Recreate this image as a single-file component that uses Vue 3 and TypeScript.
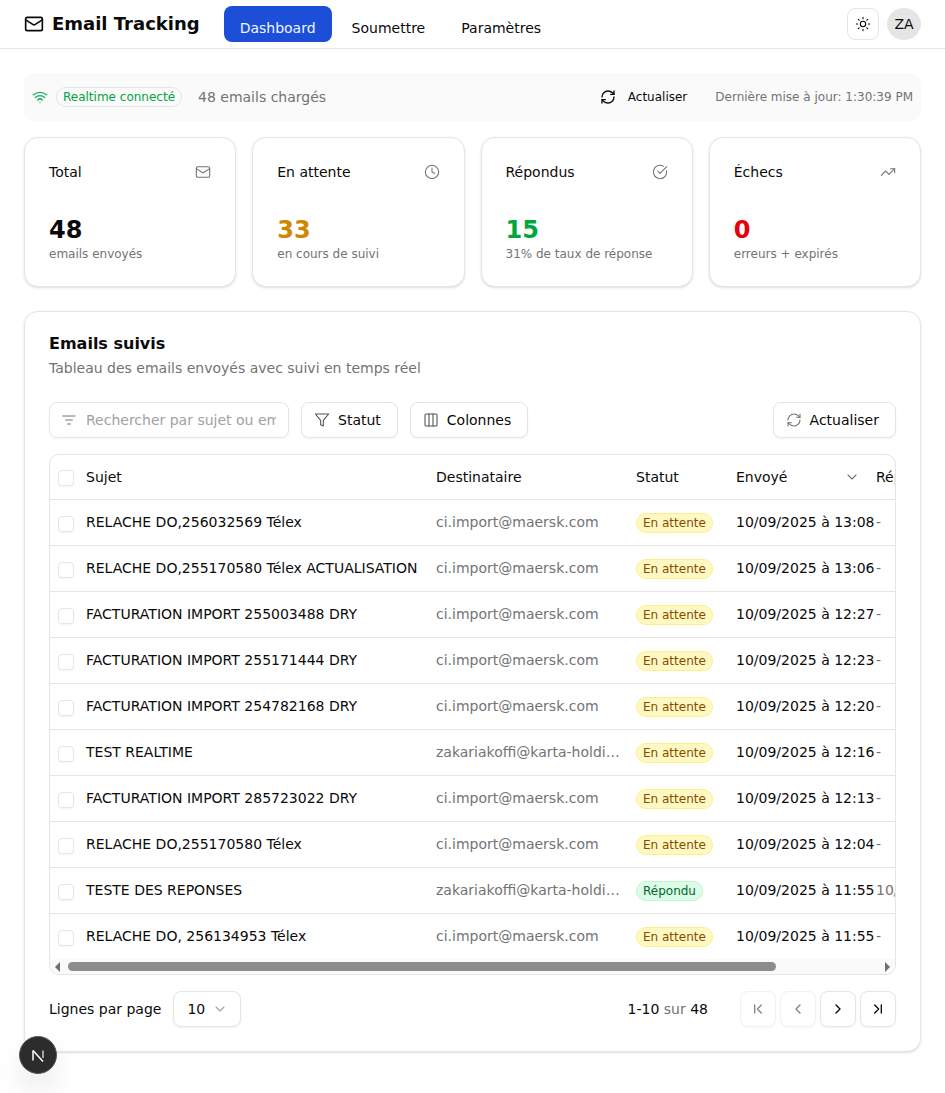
<script setup lang="ts">
interface Row { subject: string; to: string; status: string; sent: string; reply: string }
const m = 'ci.import@maersk.com'
const z = 'zakariakoffi@karta-holding.ci'
const w = 'En attente'
const rows: Row[] = [
  { subject: 'RELACHE DO,256032569 Télex', to: m, status: w, sent: '10/09/2025 à 13:08', reply: '-' },
  { subject: 'RELACHE DO,255170580 Télex ACTUALISATION', to: m, status: w, sent: '10/09/2025 à 13:06', reply: '-' },
  { subject: 'FACTURATION IMPORT 255003488 DRY', to: m, status: w, sent: '10/09/2025 à 12:27', reply: '-' },
  { subject: 'FACTURATION IMPORT 255171444 DRY', to: m, status: w, sent: '10/09/2025 à 12:23', reply: '-' },
  { subject: 'FACTURATION IMPORT 254782168 DRY', to: m, status: w, sent: '10/09/2025 à 12:20', reply: '-' },
  { subject: 'TEST REALTIME', to: z, status: w, sent: '10/09/2025 à 12:16', reply: '-' },
  { subject: 'FACTURATION IMPORT 285723022 DRY', to: m, status: w, sent: '10/09/2025 à 12:13', reply: '-' },
  { subject: 'RELACHE DO,255170580 Télex', to: m, status: w, sent: '10/09/2025 à 12:04', reply: '-' },
  { subject: 'TESTE DES REPONSES', to: z, status: 'Répondu', sent: '10/09/2025 à 11:55', reply: '10/09/2025 à 12:02' },
  { subject: 'RELACHE DO, 256134953 Télex', to: m, status: w, sent: '10/09/2025 à 11:55', reply: '-' },
]
const cards = [
  { title: 'Total', value: '48', sub: 'emails envoyés', cls: 'v-black', icon: 'mail' },
  { title: 'En attente', value: '33', sub: 'en cours de suivi', cls: 'v-amber', icon: 'clock' },
  { title: 'Répondus', value: '15', sub: '31% de taux de réponse', cls: 'v-green', icon: 'check' },
  { title: 'Échecs', value: '0', sub: 'erreurs + expirés', cls: 'v-red', icon: 'trend' },
]
</script>

<template>
  <div class="page">
    <header class="topbar">
      <div class="brand">
        <svg class="brand-icon" viewBox="0 0 24 24"><rect x="2" y="4" width="20" height="16" rx="2" /><path d="m22 7-8.97 5.7a1.94 1.94 0 0 1-2.06 0L2 7" /></svg>
        <span>Email Tracking</span>
      </div>
      <nav class="nav">
        <a class="nav-item active">Dashboard</a>
        <a class="nav-item">Soumettre</a>
        <a class="nav-item">Paramètres</a>
      </nav>
      <div class="top-right">
        <button class="theme">
          <svg viewBox="0 0 24 24"><circle cx="12" cy="12" r="4" /><path d="M12 2v2M12 20v2M4.93 4.93l1.41 1.41M17.66 17.66l1.41 1.41M2 12h2M20 12h2M6.34 17.66l-1.41 1.41M19.07 4.93l-1.41 1.41" /></svg>
        </button>
        <div class="avatar">ZA</div>
      </div>
    </header>

    <main class="main">
      <section class="status">
        <svg class="wifi" viewBox="0 0 24 24"><path d="M12 20h.01M2 8.82a15 15 0 0 1 20 0M5 12.859a10 10 0 0 1 14 0M8.5 16.429a5 5 0 0 1 7 0" /></svg>
        <span class="rt-badge">Realtime connecté</span>
        <span class="loaded">48 emails chargés</span>
        <button class="status-refresh">
          <svg viewBox="0 0 24 24"><path d="M3 12a9 9 0 0 1 9-9 9.75 9.75 0 0 1 6.74 2.74L21 8" /><path d="M21 3v5h-5" /><path d="M21 12a9 9 0 0 1-9 9 9.75 9.75 0 0 1-6.74-2.74L3 16" /><path d="M8 16H3v5" /></svg>
          <span>Actualiser</span>
        </button>
        <span class="updated">Dernière mise à jour: 1:30:39 PM</span>
      </section>

      <section class="cards">
        <article v-for="c in cards" :key="c.title" class="card">
          <div class="card-head">
            <span class="card-title">{{ c.title }}</span>
            <svg class="card-icon" viewBox="0 0 24 24">
              <template v-if="c.icon === 'mail'"><rect x="2" y="4" width="20" height="16" rx="2" /><path d="m22 7-8.97 5.7a1.94 1.94 0 0 1-2.06 0L2 7" /></template>
              <template v-else-if="c.icon === 'clock'"><circle cx="12" cy="12" r="10" /><path d="M12 6v6l4 2" /></template>
              <template v-else-if="c.icon === 'check'"><path d="M21.801 10A10 10 0 1 1 17 3.335" /><path d="m9 11 3 3L22 4" /></template>
              <template v-else><path d="M16 7h6v6" /><path d="m22 7-8.5 8.5-5-5L2 17" /></template>
            </svg>
          </div>
          <div class="card-value" :class="c.cls">{{ c.value }}</div>
          <div class="card-sub">{{ c.sub }}</div>
        </article>
      </section>

      <section class="panel">
        <h2 class="panel-title">Emails suivis</h2>
        <p class="panel-desc">Tableau des emails envoyés avec suivi en temps réel</p>

        <div class="toolbar">
          <label class="search">
            <svg viewBox="0 0 24 24"><path d="M3 6h18M7 12h10M10 18h4" /></svg>
            <input type="text" placeholder="Rechercher par sujet ou email..." />
          </label>
          <button class="btn">
            <svg viewBox="0 0 24 24"><path d="M22 3H2l8 9.46V19l4 2v-8.54L22 3z" /></svg>
            Statut
          </button>
          <button class="btn">
            <svg viewBox="0 0 24 24"><rect x="3" y="3" width="18" height="18" rx="2" /><path d="M9 3v18M15 3v18" /></svg>
            Colonnes
          </button>
          <button class="btn push">
            <svg class="muted-icon" viewBox="0 0 24 24"><path d="M3 12a9 9 0 0 1 9-9 9.75 9.75 0 0 1 6.74 2.74L21 8" /><path d="M21 3v5h-5" /><path d="M21 12a9 9 0 0 1-9 9 9.75 9.75 0 0 1-6.74-2.74L3 16" /><path d="M8 16H3v5" /></svg>
            Actualiser
          </button>
        </div>

        <div class="table-wrap">
          <div class="table-clip">
            <table class="table">
              <colgroup>
                <col class="c-check" /><col class="c-subj" /><col class="c-to" /><col class="c-stat" /><col class="c-sent" /><col class="c-reply" />
              </colgroup>
              <thead>
                <tr>
                  <th><span class="cb head-cb" /></th>
                  <th>Sujet</th>
                  <th>Destinataire</th>
                  <th>Statut</th>
                  <th>
                    <div class="sent-head">
                      <span>Envoyé</span>
                      <svg viewBox="0 0 24 24"><path d="m6 9 6 6 6-6" /></svg>
                    </div>
                  </th>
                  <th>Réponse</th>
                </tr>
              </thead>
              <tbody>
                <tr v-for="r in rows" :key="r.subject">
                  <td><span class="cb" /></td>
                  <td class="subj">{{ r.subject }}</td>
                  <td class="to"><div class="ell">{{ r.to }}</div></td>
                  <td><span class="pill" :class="r.status === w ? 'wait' : 'ok'">{{ r.status }}</span></td>
                  <td class="sent">{{ r.sent }}</td>
                  <td class="reply">{{ r.reply }}</td>
                </tr>
              </tbody>
            </table>
          </div>
          <div class="hscroll">
            <span class="arrow left" />
            <div class="track"><div class="thumb" /></div>
            <span class="arrow right" />
          </div>
        </div>

        <footer class="pager">
          <span class="rpp">Lignes par page</span>
          <button class="select">
            <span>10</span>
            <svg viewBox="0 0 24 24"><path d="m6 9 6 6 6-6" /></svg>
          </button>
          <span class="count">1-10 <em>sur</em> 48</span>
          <div class="pg-btns">
            <button class="pg off"><svg viewBox="0 0 24 24"><path d="m17 18-6-6 6-6M7 6v12" /></svg></button>
            <button class="pg off"><svg viewBox="0 0 24 24"><path d="m15 18-6-6 6-6" /></svg></button>
            <button class="pg"><svg viewBox="0 0 24 24"><path d="m9 18 6-6-6-6" /></svg></button>
            <button class="pg"><svg viewBox="0 0 24 24"><path d="m7 18 6-6-6-6M17 6v12" /></svg></button>
          </div>
        </footer>
      </section>
    </main>

    <div class="next-badge">
      <svg viewBox="0 0 18 18" class="next-logo"><path d="M4 4.5v10" /><path d="M4 4.5 14 15.5" /><path class="n-right" d="M14 4.5v7.5" /></svg>
    </div>
  </div>
</template>

<style>
html, body { margin: 0; background: #fff; }
</style>

<style scoped>
.page { position: relative; min-height: 1093px; font-family: "DejaVu Sans", sans-serif; color: #0a0a0a; font-size: 14px; }
svg { fill: none; stroke: currentColor; stroke-width: 2; stroke-linecap: round; stroke-linejoin: round; flex: none; display: block; }
button { font-family: inherit; cursor: pointer; }

.topbar { height: 48px; border-bottom: 1px solid #e5e5e5; display: flex; align-items: flex-start; padding: 0 24px; }
.brand { display: flex; align-items: center; gap: 8px; height: 48px; font-size: 18px; font-weight: 700; }
.brand span { position: relative; top: -1px; }
.brand-icon { width: 20px; height: 20px; }
.nav { display: flex; margin-left: 24px; padding-top: 6px; gap: 4px; }
.nav-item { height: 36px; box-sizing: border-box; padding: 13px 16px 0; font-size: 14px; line-height: 18px; border-radius: 6px; }
.nav-item.active { background: #1d4ed8; color: #eff6ff; border-radius: 8px; }
.top-right { margin-left: auto; display: flex; align-items: center; gap: 8px; height: 48px; }
.theme { width: 32px; height: 32px; padding: 0; border: 1px solid #e5e5e5; border-radius: 8px; background: #fff; display: flex; align-items: center; justify-content: center; color: #0a0a0a; }
.theme svg { width: 16px; height: 16px; stroke-width: 1.6; }
.avatar { width: 34px; height: 32px; border-radius: 50%; background: #e5e5e5; display: flex; align-items: center; justify-content: center; font-size: 14px; }

.main { padding: 24px; display: flex; flex-direction: column; gap: 16px; }
.status { height: 48px; background: #fafafa; border-radius: 10px; display: flex; align-items: center; padding: 0 8px; }
.wifi { width: 16px; height: 16px; color: #16b364; }
.rt-badge { margin-left: 8px; height: 20px; box-sizing: border-box; border: 1px solid #e5e5e5; border-radius: 10px; padding: 0 6px; font-size: 12px; line-height: 18px; color: #00a63e; }
.loaded { margin-left: 16px; color: #737373; font-size: 14px; }
.status-refresh { margin-left: auto; background: none; border: 0; display: flex; align-items: center; gap: 12px; padding: 0; font-size: 12px; color: #0a0a0a; }
.status-refresh svg { width: 16px; height: 16px; }
.updated { margin-left: 28px; font-size: 12px; color: #737373; }

.cards { display: grid; grid-template-columns: repeat(4, 1fr); gap: 16px; }
.card { height: 150px; box-sizing: border-box; border: 1px solid #e5e5e5; border-radius: 14px; padding: 24px; background: #fff; box-shadow: 0 1px 3px rgba(0,0,0,.1), 0 1px 2px -1px rgba(0,0,0,.1); }
.card-head { display: flex; justify-content: space-between; align-items: center; height: 20px; }
.card-title { font-size: 14px; }
.card-icon { width: 16px; height: 16px; color: #737373; stroke-width: 1.6; }
.card-value { margin-top: 32px; font-size: 24px; line-height: 32px; font-weight: 700; }
.card-sub { font-size: 12px; line-height: 16px; color: #737373; }
.v-black { color: #0a0a0a; }
.v-amber { color: #d08700; }
.v-green { color: #00a63e; }
.v-red { color: #e7000b; }

.panel { margin-top: 8px; height: 741px; box-sizing: border-box; border: 1px solid #e5e5e5; border-radius: 14px; padding: 24px; background: #fff; box-shadow: 0 1px 3px rgba(0,0,0,.1), 0 1px 2px -1px rgba(0,0,0,.1); }
.panel-title { margin: 0; font-size: 16px; line-height: 16px; font-weight: 700; }
.panel-desc { margin: 6px 0 0; font-size: 14px; line-height: 20px; color: #737373; }

.toolbar { margin-top: 24px; display: flex; gap: 12px; }
.search { width: 240px; height: 36px; box-sizing: border-box; border: 1px solid #e5e5e5; border-radius: 8px; display: flex; align-items: center; padding: 0 12px 0 11px; gap: 9px; box-shadow: 0 1px 2px rgba(0,0,0,.05); }
.search svg { width: 16px; height: 16px; color: #a1a1a1; }
.search input { flex: 1; min-width: 0; border: 0; outline: 0; padding: 0; font: 14px "DejaVu Sans", sans-serif; background: none; }
.search input::placeholder { color: #a1a1a1; opacity: 1; }
.btn { height: 36px; box-sizing: border-box; border: 1px solid #e5e5e5; border-radius: 8px; background: #fff; display: flex; align-items: center; gap: 8px; padding: 0 16px 0 12px; font-size: 14px; color: #0a0a0a; box-shadow: 0 1px 2px rgba(0,0,0,.05); }
.btn svg { width: 16px; height: 16px; color: #525252; stroke-width: 1.6; }
.btn .muted-icon { color: #737373; }
.push { margin-left: auto; }

.table-wrap { margin-top: 16px; height: 521px; box-sizing: border-box; border: 1px solid #e5e5e5; border-radius: 10px; overflow: hidden; display: flex; flex-direction: column; }
.table-clip { flex: 1; min-height: 0; overflow: hidden; }
.table { border-collapse: collapse; table-layout: fixed; width: 970px; }
.c-check { width: 36px; } .c-subj { width: 350px; } .c-to { width: 200px; } .c-stat { width: 100px; } .c-sent { width: 140px; } .c-reply { width: 144px; }
th { height: 43px; padding: 0 0 1px; text-align: left; font-weight: 400; font-size: 14px; border-bottom: 1px solid #e5e5e5; white-space: nowrap; }
td { height: 43px; padding: 0 0 2px; border-bottom: 1px solid #e5e5e5; white-space: nowrap; font-size: 14px; }
tbody tr:last-child td { border-bottom: 0; }
th:first-child, td:first-child { padding-left: 8px; }
.cb { display: block; width: 16px; height: 16px; box-sizing: border-box; border: 1px solid #e5e5e5; border-radius: 4px; box-shadow: 0 1px 2px rgba(0,0,0,.05); margin-top: 5px; }
.head-cb { margin-top: 3px; }
.sent-head { display: flex; align-items: center; justify-content: space-between; padding-right: 16px; }
.sent-head svg { width: 16px; height: 16px; color: #737373; stroke-width: 1.6; }
.to { color: #737373; }
.ell { width: 184px; overflow: hidden; text-overflow: ellipsis; }
.pill { display: inline-block; height: 20px; box-sizing: border-box; border-radius: 10px; padding: 0 6px; font-size: 12px; line-height: 18px; border: 1px solid; vertical-align: middle; position: relative; top: 1px; }
.wait { background: #fef9c2; border-color: #fff085; color: #894b00; }
.ok { background: #dcfce7; border-color: #b9f8cf; color: #016630; }
.reply { color: #737373; }

.hscroll { flex: none; height: 15px; background: #fafafa; display: flex; align-items: center; }
.track { flex: 1; height: 100%; display: flex; align-items: center; padding: 0 3px; min-width: 0; }
.thumb { width: 708px; height: 9px; border-radius: 5px; background: #8c8c8c; }
.arrow { flex: none; width: 15px; height: 15px; display: flex; align-items: center; justify-content: center; }
.arrow::before { content: ""; border-style: solid; border-color: transparent; border-width: 5px; }
.arrow.left::before { border-right-color: #6f6f6f; border-left-width: 0; }
.arrow.right::before { border-left-color: #6f6f6f; border-right-width: 0; }

.pager { margin-top: 16px; display: flex; align-items: center; }
.rpp { font-size: 14px; }
.select { margin-left: 12px; width: 68px; height: 36px; box-sizing: border-box; border: 1px solid #e5e5e5; border-radius: 8px; background: #fff; display: flex; align-items: center; justify-content: space-between; padding: 0 12px 0 13px; font-size: 14px; color: #0a0a0a; box-shadow: 0 1px 2px rgba(0,0,0,.05); }
.select svg { width: 16px; height: 16px; color: #a1a1a1; stroke-width: 1.6; }
.count { margin-left: auto; font-size: 14px; }
.count em { font-style: normal; color: #737373; }
.pg-btns { margin-left: 32px; display: flex; gap: 4px; }
.pg { width: 36px; height: 36px; padding: 0; box-sizing: border-box; border: 1px solid #e5e5e5; border-radius: 8px; background: #fff; display: flex; align-items: center; justify-content: center; color: #0a0a0a; box-shadow: 0 1px 2px rgba(0,0,0,.05); }
.pg svg { width: 16px; height: 16px; }
.pg.off { opacity: .5; }

.next-badge { position: absolute; left: 19px; top: 1036px; width: 38px; height: 38px; box-sizing: border-box; border-radius: 50%; background: #2c2c2c; border: 1px solid #555; box-shadow: 0 16px 32px -8px rgba(0,0,0,.24); display: flex; align-items: center; justify-content: center; }
.next-logo { width: 18px; height: 18px; color: #fff; stroke-width: 1.5; stroke-linecap: butt; }
.n-right { opacity: .75; }
</style>
